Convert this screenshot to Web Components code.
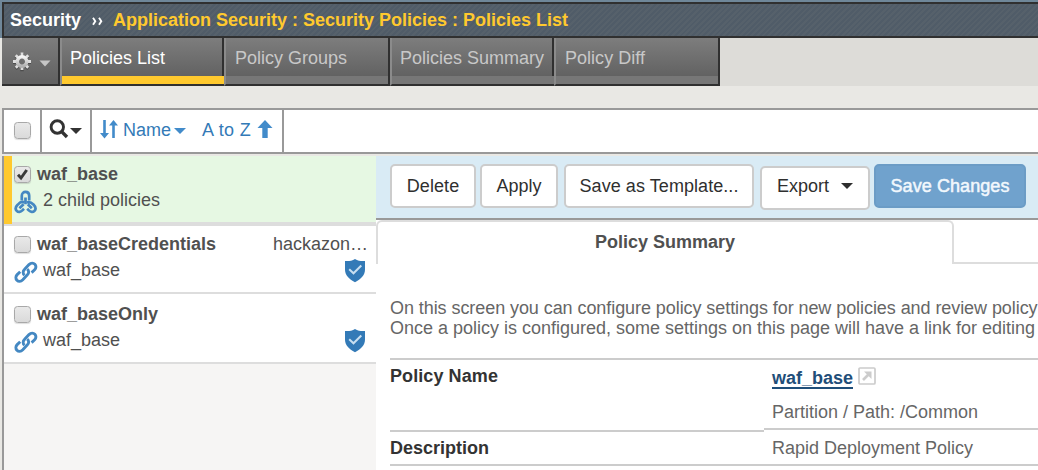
<!DOCTYPE html>
<html lang="en">
<head>
<meta charset="utf-8">
<title>Policies List</title>
<style>
html,body{margin:0;height:100%;overflow:hidden}
body{font:18px/20px "Liberation Sans",Arial,sans-serif;color:#505050;background:#e9e8e4}
</style>
</head>
<body>
<policy-app></policy-app>
<script>
const define = (name, html, setup) => {
  const tpl = document.createElement('template');
  tpl.innerHTML = html;
  customElements.define(name, class extends HTMLElement {
    constructor() {
      super();
      this.attachShadow({mode: 'open'}).append(tpl.content.cloneNode(true));
    }
    connectedCallback() { if (setup) setup(this, this.shadowRoot); }
  });
};

/* A label tracked so that it takes the advance width given in "w". */
define('fit-text', `<style>
:host{display:inline-block;white-space:nowrap;flex:none}
</style><slot></slot>`, el => {
  const want = +el.getAttribute('w');
  const fit = () => {
    const n = el.textContent.length;
    el.style.letterSpacing = '0px';
    const now = el.getBoundingClientRect().width;
    if (now && want) el.style.letterSpacing = ((want - now) / n).toFixed(4) + 'px';
  };
  queueMicrotask(fit);
});

define('title-bar', `<style>
:host{display:flex;box-sizing:border-box;height:38px;border:solid #6f8799;border-width:2px 0 0 2px;font-weight:bold;color:#fff}
.in{flex:1;display:flex;box-sizing:border-box;height:36px;border:2px solid #303030;border-right:0;padding:6px 0 0 6px;
background:repeating-linear-gradient(135deg,#505c68 0 2px,#56616b 2px 4px)}
svg{margin:7px 10px 0 11px;flex:none}
.y{color:#ffc92e}
</style><div class="in"><slot></slot>
<svg width="11" height="9" fill="none" stroke="#fff" stroke-width="1.9"><path d="M1 .8 3.3 4.2 1 7.8M7 .8 9.3 4.2 7 7.8"/></svg>
<span class="y"><slot name="path"></slot></span></div>`);

define('nav-tab', `<style>
:host{display:block;box-sizing:border-box;width:var(--w,165px);height:48px;border-left:2px solid #8b8b8b;border-bottom:2px solid #303030;color:#c8c8c8;
background:linear-gradient(#7d7d7d,#626262 38px)}
.t{box-sizing:border-box;height:38px;border-right:2px solid #303030;padding:10px 0 0 var(--p,9px)}
.b{height:8px;background:#777;border-right:2px solid #303030}
:host([on]){color:#fff}
:host([on]) .b{background:#ffc92e;border-color:#ffc92e}
:host([join]) .b{border-color:#777}
</style><div class="t"><slot></slot></div><div class="b"></div>`);

define('gear-menu', `<style>
:host{display:flex;box-sizing:border-box;width:58px;height:48px;border:solid #303030;border-width:0 2px 2px 0;background:linear-gradient(#7d7d7d,#626262 42px)}
svg{display:block}
</style><svg width="56" height="46"><defs><linearGradient id="g" x2="0" y2="1"><stop stop-color="#f4f4f4"/><stop offset="1" stop-color="#b0b0b0"/></linearGradient></defs>
<g transform="translate(20 23.5)"><g transform="translate(0 .8)" stroke="#4c4c4c" stroke-width="3.4"><path d="M0-9V-5M0 5V9M-9 0h4M5 0h4M-6.4-6.4-4-4M4 4 6.4 6.4M6.4-6.4 4-4M-4 4-6.4 6.4"/></g>
<g stroke="#dedede" stroke-width="2.8"><path d="M0-9V-5M0 5V8.6M-9 0h4M5 0h4M-6.3-6.3-4-4M4 4 6.2 6.2M6.3-6.3 4-4M-4 4-6.2 6.2"/></g>
<circle r="4.7" fill="none" stroke="url(#g)" stroke-width="3.4"/></g><path d="M37.5 22.5H48.5L43 28.5Z" fill="#c6c6c6"/></svg>`);

define('check-box', `<style>
:host{display:block;flex:none;box-sizing:border-box;width:17px;height:17px;border:1.5px solid #a8a8a8;border-radius:3.5px;background:linear-gradient(#e9e9e9,#dadada);box-shadow:0 1px 1px #0002}
svg{display:none}
:host([checked]) svg{display:block}
</style><svg width="15" height="15" viewBox="0 0 15 15"><path d="M3 7.8 6 11 11.7 3" fill="none" stroke="#3a3a3a" stroke-width="3"/></svg>`);

define('filter-bar', `<style>
:host{display:flex;box-sizing:border-box;height:46px;margin-left:2px;border:2px solid #999;border-right:0;background:#fff;color:#337ab7}
div{box-sizing:border-box;height:42px;border-right:2px solid #999;display:flex}
.c{width:38px;padding:12px 0 0 10px}
.s{width:50px}
.n{width:192px}
svg{display:block;flex:none}
.n fit-text{margin-top:10px}
</style><div class="c"><check-box></check-box></div>
<div class="s"><svg width="48" height="42"><circle cx="15.3" cy="17" r="6.2" fill="none" stroke="#333" stroke-width="2.9"/><path d="M19.7 21.6 25 27" stroke="#333" stroke-width="3.4"/><path d="M28 18H40L34 24Z" fill="#333"/></svg></div>
<div class="n"><svg width="31" height="42"><g fill="#428bca"><path d="M11.2 10h2.6v13H17L12.5 28.5 8 23h3.2Z"/><path d="M20.2 28h2.6V15.5H26L21.5 10 17 15.5h3.2Z"/></g></svg>
<fit-text w="48">Name</fit-text><svg width="31" height="42"><path d="M3 18H15L9 24Z" fill="#428bca"/></svg>
<fit-text w="49">A to Z</fit-text><svg width="25" height="42"><path d="M14 10 21.5 18H16.7V28H11.3V18H6.5Z" fill="#428bca"/></svg></div>`);

define('link-icon', `<style>
:host{display:block;width:24px;height:24px;flex:none}svg{display:block}
.m{display:none}:host([many]) .m{display:block}:host([many]) .o{display:none}
</style><svg width="24" height="24" viewBox="0 0 24 24" fill="none" stroke="#4488c2" stroke-width="2.9">
<g class="o"><path d="M10.6 15.2C8.6 13.6 8.8 11.2 10.4 9.6L15 4.6C17 2.6 19.4 2.7 20.9 4.2 22.3 5.6 22.3 8 20.6 9.8L17.6 12.6"/><path d="M13.2 9.2C15.2 10.8 15 13.2 13.4 14.8L8.8 19.8C6.8 21.8 4.4 21.7 2.9 20.2 1.5 18.8 1.5 16.4 3.2 14.6L6.2 11.8"/></g>
<g class="m" stroke-width="2.7"><path d="M7.8 10.6V5.8C7.8 3.2 9.6 1.9 11.5 1.9S15.2 3.2 15.2 5.8V10.6M11.5 7.5V14.2"/><path d="M10.5 12.5C8 11.2 5.8 12.4 3.6 14.8 1.2 17.2 1.4 19.4 2.7 20.8 4.2 22.4 6.6 22.2 8.4 20.4L10 18.8"/><path d="M5.4 18.2 9.6 14.2M12.8 12.5C15.2 11.4 17.4 12.4 19.7 14.8 22 17.2 21.8 19.4 20.5 20.8 19 22.4 16.6 22.2 14.8 20.4L13.2 18.8M17.8 18.2 13.8 14.2"/></g></svg>`);

define('policy-row', `<style>
:host{display:block;box-sizing:border-box;height:var(--h,70px);border-bottom:2px solid #ddd;background:#fff;padding:var(--top,8px) 8px 0 10px;position:relative}
:host([on]){background:#e6f8e3;border-bottom-width:4px}
:host([on])::before{content:"";position:absolute;left:0;top:0;width:8px;height:68px;background:#ffc92e}
.a{display:flex;height:26px;font-weight:bold}
.a check-box{margin:2px 6px 0 0}
.a .g{margin-left:auto;font-weight:normal}
.b{display:flex;height:24px}
.b link-icon{margin:0 5px 0 0}
.b svg{display:none;margin:-1px 2px 0 auto}
:host([shield]) .b svg{display:block}
</style><div class="a"><check-box></check-box><slot></slot><span class="g"><slot name="group"></slot></span></div>
<div class="b"><link-icon></link-icon><slot name="sub"></slot><svg width="22" height="24"><path d="M11 0C14 2 17.5 2.2 21 2V10.5C21 16 17 20.2 11 23.2 5 20.2 1 16 1 10.5V2C4.5 2.2 8 2 11 0Z" fill="#337ab7"/><path d="M5.2 10.2 9.5 14.3 17.3 6.5" fill="none" stroke="#c8dff0" stroke-width="2"/></svg></div>`,
(el, root) => {
  if (el.hasAttribute('on')) {
    root.querySelector('check-box').setAttribute('checked', '');
    root.querySelector('link-icon').setAttribute('many', '');
  }
});

define('push-button', `<style>
:host{display:flex;justify-content:center;box-sizing:border-box;flex:none;height:44px;padding-top:10px;border:2px solid #ccc;border-radius:5px;background:#fff;color:#2f2f2f}
:host([primary]){background:#70a2cd;border-color:#6b9cc6;color:#f2f8fd;-webkit-text-stroke:.5px #f2f8fd}
svg{display:none}
:host([menu]) svg{display:block;margin:7px 0 0 12px}
</style><slot></slot><svg width="12" height="6"><path d="M0 0H12L6 6Z" fill="#2f2f2f"/></svg>`);

define('info-row', `<style>
:host{display:flex;color:#666}
.l{box-sizing:border-box;width:374px;height:var(--lh);border-bottom:2px solid #ccc;font-weight:bold;color:#333;padding-top:6px}
.v{box-sizing:border-box;flex:1;height:var(--vh);border-bottom:2px solid #ccc;padding:6px 0 0 8px}
</style><div class="l"><slot name="label"></slot></div><div class="v"><slot></slot></div>`);

define('policy-app', `<style>
:host{display:flex;flex-direction:column;width:1038px;height:470px;overflow:hidden}
title-bar,.tabs,filter-bar{flex:none}
.tabs{display:flex;height:48px;margin-left:2px;background:#dddcd8}
.gap{height:22px;flex:none}
.main{display:flex;flex:1;margin-top:2px;min-height:0}
.list{box-sizing:border-box;width:374px;margin-left:2px;border-left:2px solid #999;background:#f6f5f4;flex:none}
.detail{flex:1;min-width:0;background:#fff}
.acts{display:flex;box-sizing:border-box;height:64px;padding:8px 0 0 14px;background:#d9ebf5;border-bottom:2px solid #999}
.sum{display:flex;height:44px;align-items:flex-end}
.st{box-sizing:border-box;width:578px;height:44px;border:2px solid #ddd;border-bottom:0;border-radius:6px 6px 0 0;text-align:center;font-weight:bold;padding:10px 0 0 0}
.rest{flex:1;height:2px;background:#ddd}
.body{padding:34px 0 0 14px;color:#666}
.info{margin-top:20px;border-top:2px solid #ccc}
.nm{display:flex;margin-top:2px}
.nm a{color:#1f4e79;font-weight:bold;height:19px;border-bottom:2px solid #1f4e79}
.nm svg{margin:-1px 0 0 5px;display:block}
.path{margin-top:13px}
p{margin:0}
p fit-text{display:block;width:max-content}
</style>
<title-bar><fit-text w="71">Security</fit-text><fit-text slot="path" w="455">Application Security : Security Policies : Policies List</fit-text></title-bar>
<div class="tabs"><gear-menu></gear-menu>
<nav-tab on style="--w:164px;--p:8px"><fit-text w="95">Policies List</fit-text></nav-tab>
<nav-tab style="--w:166px"><fit-text w="112">Policy Groups</fit-text></nav-tab>
<nav-tab join style="--w:164px;--p:8px"><fit-text w="144">Policies Summary</fit-text></nav-tab>
<nav-tab style="--w:166px"><fit-text w="80">Policy Diff</fit-text></nav-tab></div>
<div class="gap"></div>
<filter-bar></filter-bar>
<div class="main"><div class="list">
<policy-row on><fit-text w="81">waf_base</fit-text><fit-text slot="sub" w="117">2 child policies</fit-text></policy-row>
<policy-row shield style="--h:68px"><fit-text w="179">waf_baseCredentials</fit-text><fit-text slot="group" w="95">hackazon…</fit-text><fit-text slot="sub" w="77">waf_base</fit-text></policy-row>
<policy-row shield style="--top:10px"><fit-text w="121">waf_baseOnly</fit-text><fit-text slot="sub" w="77">waf_base</fit-text></policy-row>
</div><div class="detail">
<div class="acts">
<push-button style="width:86px"><fit-text w="52.5">Delete</fit-text></push-button>
<push-button style="width:78px;margin-left:4px"><fit-text w="45">Apply</fit-text></push-button>
<push-button style="width:190px;margin-left:6px"><fit-text w="159">Save as Template...</fit-text></push-button>
<push-button menu style="width:110px;margin:2px 0 0 6px;padding-top:8px"><fit-text w="52">Export</fit-text></push-button>
<push-button primary style="width:152px;margin-left:4px"><fit-text w="119">Save Changes</fit-text></push-button></div>
<div class="sum"><div class="st"><fit-text w="140">Policy Summary</fit-text></div><div class="rest"></div></div>
<div class="body"><p><fit-text w="647.5">On this screen you can configure policy settings for new policies and review policy</fit-text><fit-text w="645">Once a policy is configured, some settings on this page will have a link for editing</fit-text></p>
<div class="info">
<info-row style="--lh:72px;--vh:70px"><fit-text slot="label" w="108">Policy Name</fit-text>
<div class="nm"><a><fit-text w="81">waf_base</fit-text></a><svg width="18" height="18" fill="none" stroke="#ccc"><rect x="1" y="1" width="16" height="16" rx="1" stroke-width="1.7"/><path d="M5 13 11 7" stroke-width="2.6"/><path d="M6 4.5H13.5V12Z" fill="#ccc" stroke="none"/></svg></div>
<div class="path"><fit-text w="206">Partition / Path: /Common</fit-text></div></info-row>
<info-row style="--lh:34px;--vh:34px"><fit-text slot="label" w="99">Description</fit-text><fit-text w="201">Rapid Deployment Policy</fit-text></info-row>
</div></div></div></div>`);
</script>
</body>
</html>
